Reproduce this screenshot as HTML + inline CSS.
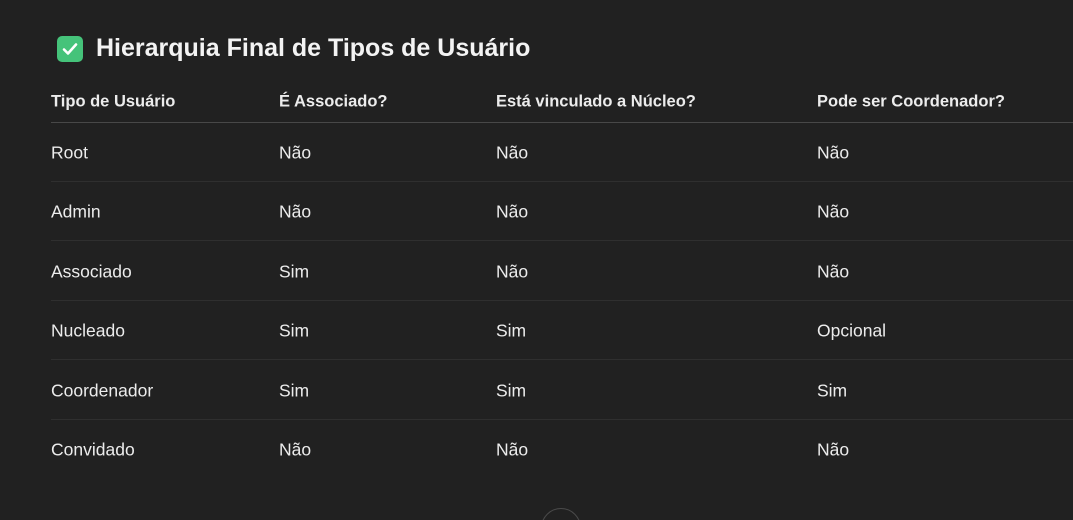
<!DOCTYPE html>
<html><head><meta charset="utf-8"><style>
html,body{margin:0;padding:0;background:#212121;width:1073px;height:520px;overflow:hidden;font-family:"Liberation Sans","DejaVu Sans",sans-serif;color:#ececec}
#w{position:relative;width:1073px;height:520px;overflow:hidden}
.t{position:absolute;left:96px;top:34px;font-size:25px;font-weight:bold;color:#f3f3f3;white-space:nowrap}
.ic{position:absolute;left:57px;top:36px;width:26px;height:26px;border-radius:5px;background:#45c37a}
.c{position:absolute;font-size:17.5px;white-space:nowrap;transform:translateY(-50%)}
.h{font-weight:bold;font-size:16.5px}
.l{position:absolute;left:51px;width:1022px;height:1px;background:#2f2f2f}
</style></head><body><div id="w">
<div class="ic"><svg width="26" height="26" viewBox="0 0 26 26"><path d="M7 13.5l4 4 8-9" stroke="#fff" stroke-width="2.6" fill="none" stroke-linecap="round" stroke-linejoin="round"/></svg></div>
<div class="t">Hierarquia Final de Tipos de Usuário</div>
<div class="c h" style="left:51px;top:102px">Tipo de Usuário</div>
<div class="c h" style="left:279px;top:102px">É Associado?</div>
<div class="c h" style="left:496px;top:102px">Está vinculado a Núcleo?</div>
<div class="c h" style="left:817px;top:102px">Pode ser Coordenador?</div>
<div class="l" style="top:122px;background:#484848"></div>
<div class="l" style="top:181px"></div><div class="l" style="top:240px"></div><div class="l" style="top:300px"></div><div class="l" style="top:359px"></div><div class="l" style="top:419px"></div>
<div class="c" style="left:51px;top:153px">Root</div><div class="c" style="left:279px;top:153px">Não</div><div class="c" style="left:496px;top:153px">Não</div><div class="c" style="left:817px;top:153px">Não</div>
<div class="c" style="left:51px;top:212px">Admin</div><div class="c" style="left:279px;top:212px">Não</div><div class="c" style="left:496px;top:212px">Não</div><div class="c" style="left:817px;top:212px">Não</div>
<div class="c" style="left:51px;top:272px">Associado</div><div class="c" style="left:279px;top:272px">Sim</div><div class="c" style="left:496px;top:272px">Não</div><div class="c" style="left:817px;top:272px">Não</div>
<div class="c" style="left:51px;top:331px">Nucleado</div><div class="c" style="left:279px;top:331px">Sim</div><div class="c" style="left:496px;top:331px">Sim</div><div class="c" style="left:817px;top:331px">Opcional</div>
<div class="c" style="left:51px;top:391px">Coordenador</div><div class="c" style="left:279px;top:391px">Sim</div><div class="c" style="left:496px;top:391px">Sim</div><div class="c" style="left:817px;top:391px">Sim</div>
<div class="c" style="left:51px;top:450px">Convidado</div><div class="c" style="left:279px;top:450px">Não</div><div class="c" style="left:496px;top:450px">Não</div><div class="c" style="left:817px;top:450px">Não</div>
<div style="position:absolute;left:541px;top:508px;width:40px;height:12px;overflow:hidden"><div style="width:38px;height:38px;border-radius:50%;border:1px solid #4a4a4a"></div></div>
</div></body></html>
